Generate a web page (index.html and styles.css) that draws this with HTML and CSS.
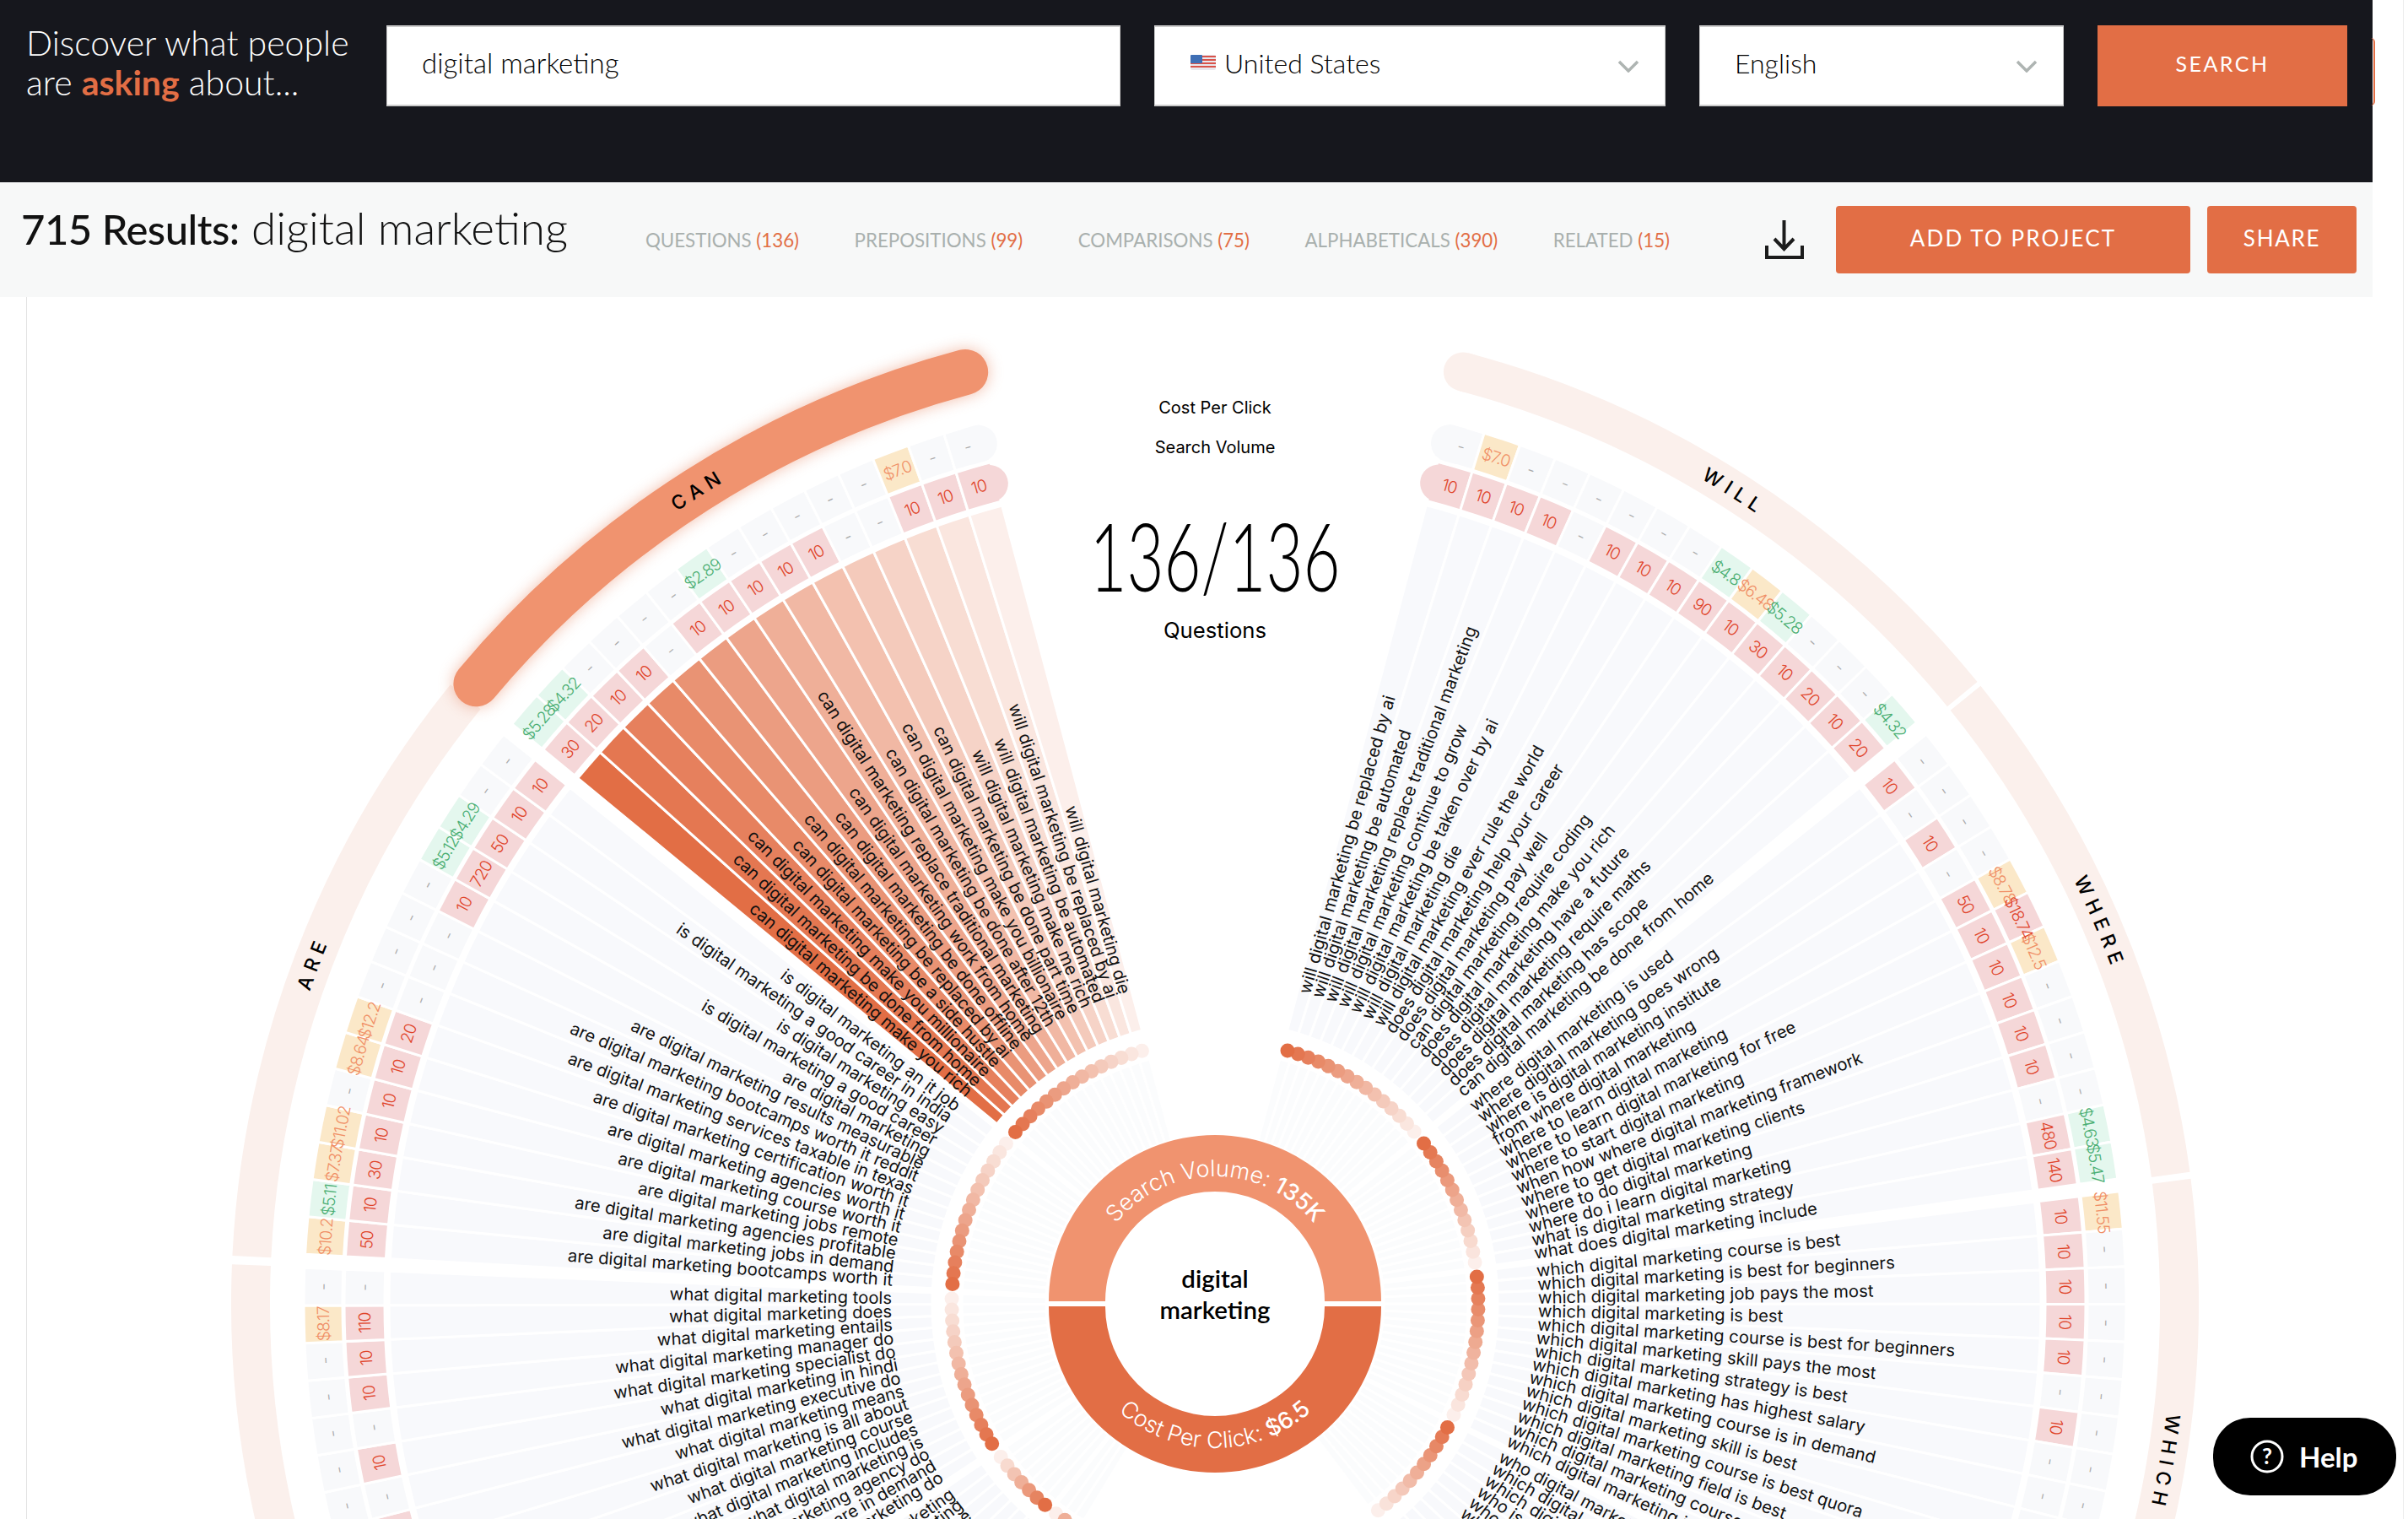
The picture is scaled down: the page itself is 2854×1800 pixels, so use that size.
FILE: index.html
```html
<!DOCTYPE html>
<html lang="en">
<head>
  <meta charset="UTF-8" />
  <meta name="viewport" content="width=device-width, initial-scale=1.0" />
  <title>715 Results: digital marketing</title>
  <link rel="stylesheet" href="styles.css">
</head>
<body>
  <div class="app">
    <header class="search-header">
      <h1 class="tagline">Discover what people<br>are <b>asking</b> about...</h1>
      <div class="field search-input">digital marketing</div>
      <div class="field select country">
        <svg class="flag" viewBox="0 0 30 18">
          <rect width="30" height="18" rx="2" fill="#e8e8ee"/>
          <path d="M0 2h30M0 6h30M0 10h30M0 14h30" stroke="#d9534a" stroke-width="2"/>
          <rect width="14" height="10" rx="1" fill="#3f6fb5"/>
        </svg>
        <span>United States</span>
        <svg class="chevron" viewBox="0 0 26 15"><path d="M2 2l11 11L24 2"/></svg>
      </div>
      <div class="field select language">
        <span>English</span>
        <svg class="chevron" viewBox="0 0 26 15"><path d="M2 2l11 11L24 2"/></svg>
      </div>
      <button class="btn search-btn">SEARCH</button>
    </header>
    <div class="peek-btn"></div>

    <div class="results-bar">
      <h2 class="results-title"><b>715 Results:</b> digital marketing</h2>
      <nav class="tabs">
        <a>QUESTIONS <em>(136)</em></a>
        <a>PREPOSITIONS <em>(99)</em></a>
        <a>COMPARISONS <em>(75)</em></a>
        <a>ALPHABETICALS <em>(390)</em></a>
        <a>RELATED <em>(15)</em></a>
      </nav>
      <svg class="download" viewBox="0 0 46 46">
        <path d="M22.500 0v34M11 22l11.500 12L34 22"/>
        <path d="M2 30v14h42V30"/>
      </svg>
      <button class="btn add-btn">ADD TO PROJECT</button>
      <button class="btn share-btn">SHARE</button>
    </div>

    <section class="chart-panel">
      <svg id="wheel" class="wheel" viewBox="0 0 2812 1448"></svg>
    </section>
  </div>

  <button class="help">
    <svg viewBox="0 0 40 40">
      <circle cx="20" cy="20" r="18"/>
      <text x="20" y="29" text-anchor="middle">?</text>
    </svg>
    Help
  </button>
  <script src="chart.js"></script>
</body>
</html>
```

FILE: styles.css
```css
* {
  box-sizing: border-box;
}
html, body {
  height: 1800px;
}
body {
  margin: 0;
  overflow: hidden;
  background: #fff;
  color: #111;
  font-family: 'Lato', sans-serif;
  position: relative;
}
body::after {
  content: '';
  position: absolute;
  top: 0;
  bottom: 0;
  right: 5px;
  width: 1px;
  background: #ececec;
}
.app {
  width: 2812px;
}

/* top search bar */
.search-header {
  display: flex;
  align-items: flex-start;
  gap: 40px;
  height: 216px;
  padding: 30px 30px 0 31px;
  background: #16171d;
}
.tagline {
  width: 387px;
  margin: -3px 0 0;
  color: #fff;
  font-size: 41px;
  font-weight: 300;
  line-height: 47px;
  white-space: nowrap;
}
.tagline b {
  color: #e26e45;
  font-weight: 700;
}
.field {
  display: flex;
  align-items: center;
  height: 96px;
  padding-bottom: 8px;
  background: #fff;
  border: 2px solid #ccc;
  border-left-width: 1px;
  border-right-width: 1px;
  color: #000;
  font-size: 32px;
  font-weight: 300;
}
.search-input {
  width: 870px;
  padding-left: 41px;
  font-size: 33px;
}
.select {
  position: relative;
}
.country {
  width: 606px;
  padding-left: 42px;
}
.language {
  width: 432px;
  padding-left: 41px;
}
.flag {
  width: 30px;
  height: 18px;
  margin-right: 10px;
}
.chevron {
  position: absolute;
  top: 39px;
  right: 30px;
  width: 26px;
  height: 15px;
  fill: none;
  stroke: #aeb4b2;
  stroke-width: 3.5;
}
.btn {
  border: none;
  background: #e26e45;
  color: #fff;
  font-family: 'Lato', sans-serif;
  font-weight: 400;
  padding: 0 0 4px;
}
.search-btn {
  width: 296px;
  height: 96px;
  padding-bottom: 6px;
  font-size: 25px;
  letter-spacing: 2.5px;
}
.peek-btn {
  position: absolute;
  top: 45px;
  left: 2810px;
  width: 5px;
  height: 80px;
  border-right: 2px solid #e26e45;
  border-radius: 0 5px 5px 0;
}

/* results row */
.results-bar {
  display: flex;
  align-items: center;
  height: 136px;
  padding: 0 24px 0 25px;
  background: #f7f8f8;
}
.results-title {
  margin: -30px 92px 0 0;
  font-size: 53px;
  font-weight: 300;
  white-space: nowrap;
}
.results-title b {
  font-size: 49px;
  font-weight: 500;
  letter-spacing: -0.5px;
}
.tabs {
  display: flex;
  gap: 65.5px;
  font-size: 22.3px;
  color: #a9b0ae;
  white-space: nowrap;
}
.tabs em {
  color: #e26e45;
  font-style: normal;
}
.download {
  width: 46px;
  height: 46px;
  margin: 0 38px 0 113px;
  fill: none;
  stroke: #1c1c1c;
  stroke-width: 4;
  flex: none;
}
.add-btn {
  width: 420px;
  height: 80px;
  margin-right: 20px;
  border-radius: 4px;
  font-size: 26px;
  letter-spacing: 2.1px;
  flex: none;
}
.share-btn {
  width: 177px;
  height: 80px;
  border-radius: 4px;
  font-size: 26px;
  letter-spacing: 1.7px;
  flex: none;
}

/* wheel */
.chart-panel {
  height: 1448px;
  margin-left: 31px;
  border-left: 1px solid #e2e2e2;
  overflow: hidden;
}
.wheel {
  display: block;
  width: 2812px;
  height: 1448px;
  margin-left: -32px;
  font-family: 'Inter', sans-serif;
}
.ray {
  fill: #fbfcfd;
  stroke: #fff;
  stroke-width: 3;
}
.wedge {
  stroke: #fff;
  stroke-width: 3;
}
.cell {
  stroke: #fff;
  stroke-width: 3;
}
.cell.blank {
  fill: #f8f9fb;
}
.cell.vol {
  fill: #f5d7d8;
}
.cell.green {
  fill: #e4f7ee;
}
.cell.amber {
  fill: #fbe8c8;
}
.cell.hot {
  fill: #f5d7d8;
}
.cap {
  fill: none;
  stroke-linecap: round;
  stroke-width: 44;
}
.cap.blank {
  stroke: #f8f9fb;
}
.cap.vol {
  stroke: #f5d7d8;
}
.cell-label {
  font-size: 19.5px;
  font-weight: 300;
  letter-spacing: -1px;
  text-anchor: middle;
  dominant-baseline: central;
}
.cell-label.vol,
.cell-label.hot {
  fill: #e0442a;
}
.cell-label.green {
  fill: #4aae72;
}
.cell-label.amber {
  fill: #f08f66;
}
.cell-label.blank {
  fill: #aaa;
}
.question {
  font-size: 20.3px;
  font-weight: 400;
  fill: #111;
  dominant-baseline: central;
}
.band {
  fill: none;
  stroke: #fbf0ec;
  stroke-width: 46;
}
.band.active {
  stroke: #f0936f;
  stroke-width: 54;
  stroke-linecap: round;
  filter: drop-shadow(0 0 9px rgba(226, 110, 69, 0.45));
}
.band-end {
  fill: none;
  stroke: #fbf0ec;
  stroke-width: 46;
  stroke-linecap: round;
}
.band-label {
  font-size: 23px;
  font-weight: 500;
  letter-spacing: 7px;
  text-anchor: middle;
}
.stat-label {
  font-size: 20px;
  text-anchor: middle;
}
.big-count {
  font-family: 'Lato', sans-serif;
  font-size: 112px;
  font-weight: 300;
  text-anchor: middle;
}
.count-label {
  font-size: 25.7px;
  text-anchor: middle;
}
.ring-top {
  fill: #f0936f;
}
.ring-bottom {
  fill: #e26e45;
}
.ring-text {
  fill: #fff;
  font-size: 27px;
  font-weight: 300;
  text-anchor: middle;
}
.ring-text tspan {
  font-weight: 500;
}
.hub {
  font-family: 'Lato', sans-serif;
  font-size: 29.5px;
  font-weight: 600;
  text-anchor: middle;
}

/* help */
.help {
  position: absolute;
  left: 2623px;
  top: 1680px;
  display: flex;
  align-items: center;
  gap: 18px;
  width: 217px;
  height: 92px;
  padding: 0 0 0 44px;
  border: none;
  border-radius: 44px;
  background: #000;
  color: #fff;
  font-family: 'Lato', sans-serif;
  font-size: 33px;
  font-weight: 700;
}
.help svg {
  width: 40px;
  height: 40px;
  fill: none;
  stroke: #fff;
  stroke-width: 3;
}
.help text {
  fill: #fff;
  stroke: none;
  font-size: 26px;
  font-weight: 700;
}
```

FILE: chart.js
```js
const CX = 1440;
const CY = 1193;
const SLOT = 2.37;
const NS = 'http://www.w3.org/2000/svg';
const wheel = document.getElementById('wheel');

const dm = 'digital marketing';

// all groups run clockwise, darkest first; start = centre angle of the first slot
const groups = [
  { name: '', start: -147.6, from: -149, to: -141.6, items: [
    ['why ' + dm + ' is important', '-', '-'],
    ['why ' + dm, '-', '-'],
    ['why ' + dm + ' matters', '-', '-']
  ] },
  { name: '', start: -139.8, from: -141, to: -124.3, items: [
    ['how ' + dm + ' works', '-', '-'],
    ['how ' + dm + ' helps', '-', '-'],
    ['how ' + dm + ' started', '10', '-'],
    ['how ' + dm + ' grows', '-', '-'],
    ['how is ' + dm + ' done', '-', '-'],
    ['how ' + dm, '10', '-'],
    ['how is ' + dm, '-', '-']
  ] },
  { name: 'WHAT', start: -122.1, from: -123.8, to: -87.7, items: [
    ['marketing do', '-', '-'], ['jobs are in demand', '-', '-'], ['agency do', '-', '-'],
    ['is', '-', '-'], ['includes', '-', '-'], ['course', '-', '-'], ['is all about', '-', '-'],
    ['means', '10', '-'], ['executive do', '-', '-'], ['in hindi', '10', '-'],
    ['specialist do', '-', '-'], ['manager do', '10', '-'], ['entails', '10', '-'],
    ['does', '110', '$8.17'], ['tools', '-', '-']
  ].map(r => ['what ' + dm + ' ' + r[0], r[1], r[2]]) },
  { name: 'ARE', start: -85.7, from: -87.2, to: -51, items: [
    ['are ' + dm + ' bootcamps worth it', '50', '$10.2'],
    ['are ' + dm + ' jobs in demand', '10', '$5.11'],
    ['are ' + dm + ' agencies profitable', '30', '$7.37'],
    ['are ' + dm + ' jobs remote', '10', '$11.02'],
    ['are ' + dm + ' course worth it', '10', '-'],
    ['are ' + dm + ' agencies worth it', '10', '$8.64'],
    ['are ' + dm + ' certification worth it', '20', '$12.2'],
    ['are ' + dm + ' services taxable in texas', '-', '-'],
    ['are ' + dm + ' bootcamps worth it reddit', '-', '-'],
    ['are ' + dm + ' results measurable', '-', '-'],
    ['are ' + dm, '10', '-'],
    ['is ' + dm + ' a good career', '720', '$5.12'],
    ['is ' + dm + ' easy', '50', '$4.29'],
    ['is ' + dm + ' a good career in india', '10', '-'],
    ['is ' + dm + ' an it job', '10', '-']
  ] },
  { name: 'CAN', active: true, start: -49.3, from: -50, to: -15, items: [
    ['can ' + dm + ' make you rich', '30', '$5.28'],
    ['can ' + dm + ' be done from home', '20', '$4.32'],
    ['can ' + dm + ' make you millionaire', '10', '-'],
    ['can ' + dm + ' be a side hustle', '10', '-'],
    ['can ' + dm + ' be replaced by ai', '-', '-'],
    ['can ' + dm + ' be done offline', '10', '-'],
    ['can ' + dm + ' work from home', '10', '$2.89'],
    ['can ' + dm + ' replace traditional marketing', '10', '-'],
    ['can ' + dm + ' be done after 12th', '10', '-'],
    ['can ' + dm + ' make you billionaire', '10', '-'],
    ['can ' + dm + ' be done part time', '-', '-'],
    ['will ' + dm + ' make me rich', '-', '-'],
    ['will ' + dm + ' be automated', '10', '$7.0'],
    ['will ' + dm + ' be replaced by ai', '10', '-'],
    ['will ' + dm + ' die', '10', '-']
  ] },
  { name: 'WILL', start: 16, from: 14.9, to: 50.8, capStart: true, items: [
    ['will ' + dm + ' be replaced by ai', '10', '-'],
    ['will ' + dm + ' be automated', '10', '$7.0'],
    ['will ' + dm + ' replace traditional marketing', '10', '-'],
    ['will ' + dm + ' continue to grow', '10', '-'],
    ['will ' + dm + ' be taken over by ai', '-', '-'],
    ['will ' + dm + ' die', '10', '-'],
    ['will ' + dm + ' ever rule the world', '10', '-'],
    ['does ' + dm + ' help your career', '10', '-'],
    ['does ' + dm + ' pay well', '90', '$4.8'],
    ['can ' + dm + ' require coding', '10', '$6.48'],
    ['does ' + dm + ' make you rich', '30', '$5.28'],
    ['does ' + dm + ' have a future', '10', '-'],
    ['does ' + dm + ' require maths', '20', '-'],
    ['does ' + dm + ' has scope', '10', '-'],
    ['can ' + dm + ' be done from home', '20', '$4.32']
  ] },
  { name: 'WHERE', start: 52.5, from: 51.1, to: 82.3, items: [
    ['where ' + dm + ' is used', '10', '-'],
    ['where ' + dm + ' goes wrong', '-', '-'],
    ['where is ' + dm + ' institute', '10', '-'],
    ['from where ' + dm, '-', '-'],
    ['where to learn ' + dm, '50', '$8.78'],
    ['where to learn ' + dm + ' for free', '10', '$18.74'],
    ['where to start ' + dm, '10', '$12.5'],
    ['when how where ' + dm + ' framework', '10', '-'],
    ['where to get ' + dm + ' clients', '10', '-'],
    ['where to do ' + dm, '10', '-'],
    ['where do i learn ' + dm, '-', '-'],
    ['what is ' + dm + ' strategy', '480', '$4.63'],
    ['what does ' + dm + ' include', '140', '$5.47']
  ] },
  { name: 'WHICH', start: 84.1, from: 82.7, to: 116.5, items: [
    ['course is best', '10', '$11.55'], ['is best for beginners', '10', '-'],
    ['job pays the most', '10', '-'], ['is best', '10', '-'],
    ['course is best for beginners', '10', '-'], ['skill pays the most', '-', '-'],
    ['strategy is best', '10', '-'], ['has highest salary', '-', '-'],
    ['course is in demand', '-', '-'], ['skill is best', '-', '-'],
    ['course is best quora', '-', '-'], ['field is best', '-', '-'],
    ['course is good', '-', '-'], ['is in demand', '-', '-']
  ].map(r => ['which ' + dm + ' ' + r[0], r[1], r[2]]) },
  { name: '', start: 118, from: 116.9, to: 144, items: [
    ['who ' + dm + ' manager', '-', '-'],
    ['which ' + dm + ' tool is best', '-', '-'],
    ['which ' + dm + ' agency', '-', '-'],
    ['who is ' + dm + ' for', '-', '-'],
    ['who ' + dm + ' is for', '-', '-'],
    ['who ' + dm + ' needs', '-', '-'],
    ['who ' + dm + ' works', '-', '-'],
    ['who does ' + dm, '-', '-'],
    ['who uses ' + dm, '-', '-'],
    ['who ' + dm + ' helps', '-', '-'],
    ['who needs ' + dm, '-', '-']
  ] }
];

function el(parent, tag, attrs, text) {
  const node = document.createElementNS(NS, tag);
  for (const k in attrs) node.setAttribute(k, attrs[k]);
  if (text !== undefined) node.textContent = text;
  parent.appendChild(node);
  return node;
}

function pt(r, a) {
  const t = a * Math.PI / 180;
  return [CX + r * Math.sin(t), CY - r * Math.cos(t)];
}

function arc(r, a0, a1) {
  const p = pt(r, a0);
  const q = pt(r, a1);
  const large = Math.abs(a1 - a0) > 180 ? 1 : 0;
  return `M${p[0]} ${p[1]}A${r} ${r} 0 ${large} ${a1 > a0 ? 1 : 0} ${q[0]} ${q[1]}`;
}

function sector(r0, r1, a0, a1) {
  const p = pt(r0, a1);
  return arc(r1, a0, a1) + `L${p[0]} ${p[1]}` + `A${r0} ${r0} 0 0 0 ${pt(r0, a0).join(' ')}Z`;
}

// 0 = full brand orange, 1 = palest tint
function tint(t) {
  const mix = 0.89 * t;
  const c = [226, 110, 69].map(v => Math.round(v + (255 - v) * mix));
  return `rgb(${c.join(',')})`;
}

function kind(value) {
  if (value === '-') return 'blank';
  if (value[0] !== '$') return 'vol';
  const n = parseFloat(value.slice(1));
  if (n > 15) return 'hot';
  return n < 6 ? 'green' : 'amber';
}

function drawCell(angle, r0, r1, value, rounded) {
  const k = kind(value);
  const half = SLOT / 2;
  el(wheel, 'path', { d: sector(r0, r1, angle - half, angle + half), class: 'cell ' + k });
  if (rounded) {
    const mid = (r0 + r1) / 2;
    el(wheel, 'path', { d: arc(mid, angle - rounded * 0.75, angle - rounded * 0.2), class: 'cap ' + k });
  }
}

// labels overflow their cell in the busy spots, so they go on after all the fills
function drawCellLabel(angle, r0, r1, value) {
  const p = pt((r0 + r1) / 2, angle);
  el(wheel, 'text', {
    x: p[0], y: p[1], class: 'cell-label ' + kind(value),
    transform: `rotate(${angle} ${p[0]} ${p[1]})`
  }, value);
}

function drawQuestion(angle, text) {
  const p = pt(383, angle);
  const right = angle > 0;
  el(wheel, 'text', {
    x: p[0], y: p[1], class: 'question',
    'text-anchor': right ? 'start' : 'end',
    transform: `rotate(${right ? angle - 90 : angle + 90} ${p[0]} ${p[1]})`
  }, text);
}

let pathId = 0;
function curvedText(d, cls, content) {
  const id = 'curve' + pathId++;
  el(wheel, 'path', { id, d, fill: 'none' });
  const text = el(wheel, 'text', { class: cls });
  const tp = el(text, 'textPath', { href: '#' + id, startOffset: '50%' });
  tp.innerHTML = content;
}

// wedges and rays go underneath the question text
groups.forEach(g => {
  const last = g.items.length - 1;
  g.items.forEach((item, i) => {
    const a = g.start + i * SLOT;
    el(wheel, 'path', { d: sector(200, 300, a - SLOT / 2, a + SLOT / 2), class: 'ray' });
    el(wheel, 'path', {
      d: sector(335, 979, a - SLOT / 2, a + SLOT / 2),
      class: 'wedge', fill: g.active ? tint(i / last) : '#f8f9fc'
    });
    const roundStart = g.capStart && i === 0 ? 1 : 0;
    const roundEnd = g.active && i === last ? -1 : 0;
    drawCell(a, 984, 1032, item[1], roundStart || roundEnd);
    drawCell(a, 1034, 1080, item[2], roundStart || roundEnd);
  });
});

groups.forEach(g => {
  const last = g.items.length - 1;
  g.items.forEach((item, i) => {
    const a = g.start + i * SLOT;
    drawCellLabel(a, 984, 1032, item[1]);
    drawCellLabel(a, 1034, 1080, item[2]);
    drawQuestion(a, item[0]);
  });
  for (let i = last; i >= 0; i--) {
    const p = pt(312, g.start + i * SLOT);
    el(wheel, 'circle', { cx: p[0], cy: p[1], r: 8.5, fill: tint(i / last) });
  }
});

// outer bands with the group names
groups.forEach(g => {
  if (!g.active) el(wheel, 'path', { d: arc(1143, g.from, g.to), class: 'band' });
  if (g.capStart) el(wheel, 'path', { d: arc(1143, g.from, g.from + 0.3), class: 'band-end' });
});
const activeGroup = groups.find(g => g.active);
el(wheel, 'path', { d: arc(1143, activeGroup.from, activeGroup.to), class: 'band active' });
groups.filter(g => g.name).forEach(g => {
  const centre = { CAN: -32.4, WILL: 32.6, WHERE: 66.7, WHICH: 99.5, ARE: -69.3, WHAT: -106 }[g.name];
  curvedText(arc(1135, centre - 14, centre + 14), 'band-label', g.name);
});

// centre block
el(wheel, 'text', { x: CX, y: 138, class: 'stat-label' }, 'Cost Per Click');
el(wheel, 'text', { x: CX, y: 185, class: 'stat-label' }, 'Search Volume');
el(wheel, 'text', { x: CX, y: 349, class: 'big-count', textLength: 297, lengthAdjust: 'spacingAndGlyphs' }, '136/136');
el(wheel, 'text', { x: CX, y: 404, class: 'count-label' }, 'Questions');

el(wheel, 'path', { d: `M${CX - 197} ${CY - 3}A197 197 0 0 1 ${CX + 197} ${CY - 3}H${CX + 130}A130 130 0 0 0 ${CX - 130} ${CY - 3}Z`, class: 'ring-top' });
el(wheel, 'path', { d: `M${CX - 197} ${CY + 3}A197 197 0 0 0 ${CX + 197} ${CY + 3}H${CX + 130}A130 130 0 0 1 ${CX - 130} ${CY + 3}Z`, class: 'ring-bottom' });
curvedText(arc(151, -85, 85), 'ring-text', 'Search Volume: <tspan>135K</tspan>');
curvedText(arc(171, -100, -260), 'ring-text', 'Cost Per Click: <tspan>$6.5</tspan>');
el(wheel, 'text', { x: CX, y: 1174, class: 'hub' }, 'digital');
el(wheel, 'text', { x: CX, y: 1211, class: 'hub' }, 'marketing');
```
